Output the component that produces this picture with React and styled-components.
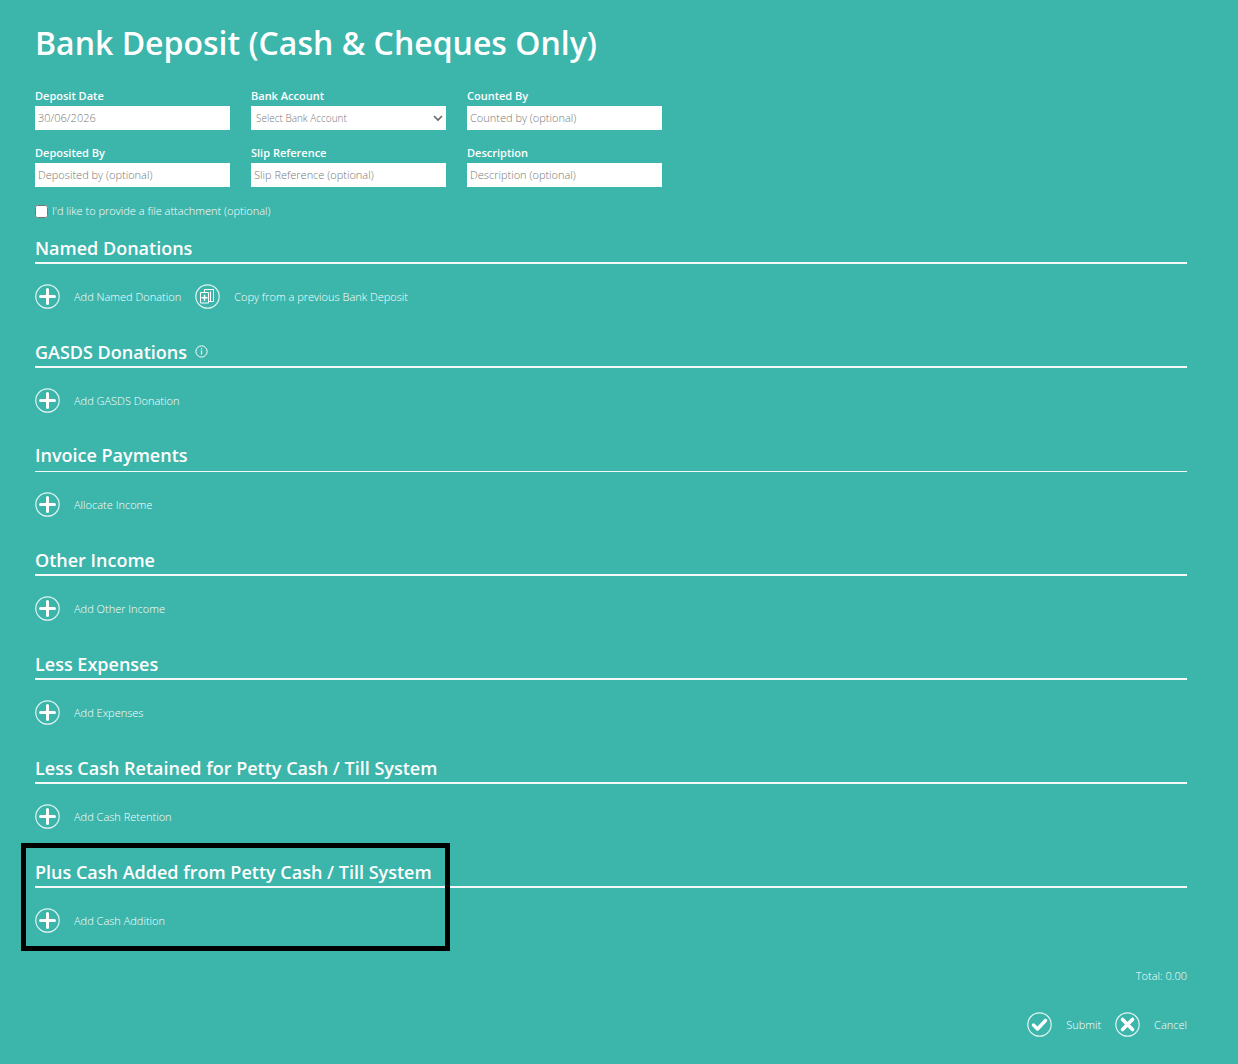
import React from "react";
import styled, { createGlobalStyle } from "styled-components";

const GlobalStyle = createGlobalStyle`
  *, *::before, *::after { box-sizing: border-box; }
  body {
    margin: 0;
    background: #3cb5ab;
    color: #fff;
    font-family: "Open Sans", "Noto Sans", sans-serif;
    font-size: 11px;
    font-weight: 350;
    line-height: 16px;
  }
`;

const Page = styled.form`
  padding: 20px 51px 24px 35px;
`;

const Title = styled.h1`
  margin: 0 0 22px;
  font-size: 32px;
  line-height: 46px;
  font-weight: 600;
`;

const Fields = styled.div`
  display: grid;
  grid-template-columns: repeat(3, 195px);
  gap: 15px 21px;
`;

const Field = styled.label`
  display: flex;
  flex-direction: column;
  gap: 2px;
  font-weight: 600;
`;

const Control = styled.input`
  width: 100%;
  height: 24px;
  padding: 0 3px 1px;
  border: 0;
  border-radius: 0;
  background: #fff;
  color: #777;
  font: 350 11px "Open Sans", "Noto Sans", sans-serif;
  &::placeholder { color: #777; opacity: 1; }
`;

const SelectBox = styled.span`
  display: grid;
  align-items: center;
  & > * { grid-area: 1 / 1; }
  & > svg { justify-self: end; margin-right: 3px; pointer-events: none; }
`;

const Select = styled(Control)`
  appearance: none;
  padding-left: 5px;
  padding-bottom: 0;
  font-size: 10px;
  font-weight: 300;
`;

const Attachment = styled.label`
  display: flex;
  align-items: center;
  gap: 4px;
  margin: 16px 0;
`;

const Checkbox = styled.input`
  width: 13px;
  height: 13px;
  margin: 0;
`;

const Section = styled.section`
  height: 104px;
`;

const Heading = styled.h2`
  display: flex;
  align-items: center;
  gap: 8px;
  height: 29px;
  margin: 0;
  padding-bottom: ${(p) => (p.$thin ? 4 : 2)}px;
  border-bottom: ${(p) => (p.$thin ? 1 : 2)}px solid #f2fbfa;
  font-size: 18px;
  line-height: 24px;
  font-weight: 600;
`;

const Actions = styled.div`
  display: flex;
  justify-content: ${(p) => (p.$end ? "flex-end" : "flex-start")};
  gap: 14px;
  margin-top: 20px;
`;

const Action = styled.button`
  display: flex;
  align-items: center;
  gap: 14px;
  padding: 0;
  border: 0;
  background: none;
  color: inherit;
  font: inherit;
  cursor: pointer;
`;

const Highlight = styled.div`
  margin: -16px 0 0 -14px;
  width: 429px;
  height: 108px;
  border: 5px solid #000;
  position: absolute;
  pointer-events: none;
`;

const Total = styled.p`
  margin: 5px 0 28px;
  text-align: right;
`;

const glyphs = {
  plus: <path d="M12.5 5.5v14M5.5 12.5h14" strokeWidth="3" strokeLinecap="round" />,
  check: <path d="M6.500 13l4 4 8-8.500" strokeWidth="3.400" strokeLinecap="round" strokeLinejoin="round" />,
  cross: <path d="M7.500 7.500l10 10M17.500 7.500l-10 10" strokeWidth="3.600" strokeLinecap="round" />,
  copy: (
    <>
      <path d="M5.500 8.500h8v10.500h-8zM9.500 8.500v-3h9v12h-5M15.500 7.500v10" strokeWidth="1" />
      <path d="M9.500 10.700v6M6.500 13.700h6" strokeWidth="1.400" />
    </>
  ),
};

const RoundIcon = ({ name }) => (
  <svg width="25" height="25" viewBox="0 0 25 25" fill="none" stroke="#fff" aria-hidden="true">
    <circle cx="12.5" cy="12.5" r="11.700" strokeWidth="1.200" strokeOpacity="0.85" />
    {glyphs[name]}
  </svg>
);

const InfoIcon = () => (
  <svg width="13" height="13" viewBox="0 0 13 13" fill="none" stroke="#fff" aria-hidden="true">
    <circle cx="6.5" cy="6.5" r="5.600" />
    <path d="M6.500 5.500v4M6.500 3.300v1.200" strokeWidth="1.200" />
  </svg>
);

const sections = [
  { title: "Named Donations", actions: [["plus", "Add Named Donation"], ["copy", "Copy from a previous Bank Deposit"]] },
  { title: "GASDS Donations", info: true, actions: [["plus", "Add GASDS Donation"]] },
  { title: "Invoice Payments", thin: true, actions: [["plus", "Allocate Income"]] },
  { title: "Other Income", actions: [["plus", "Add Other Income"]] },
  { title: "Less Expenses", actions: [["plus", "Add Expenses"]] },
  { title: "Less Cash Retained for Petty Cash / Till System", actions: [["plus", "Add Cash Retention"]] },
  { title: "Plus Cash Added from Petty Cash / Till System", highlight: true, actions: [["plus", "Add Cash Addition"]] },
];

export default function App() {
  return (
    <Page onSubmit={(e) => e.preventDefault()}>
      <GlobalStyle />
      <Title>Bank Deposit (Cash &amp; Cheques Only)</Title>
      <Fields>
        <Field>Deposit Date<Control defaultValue="30/06/2026" /></Field>
        <Field>
          Bank Account
          <SelectBox>
            <Select as="select"><option>Select Bank Account</option></Select>
            <svg width="10" height="8" viewBox="0 0 10 8" fill="none" stroke="#666" strokeWidth="1.600" aria-hidden="true">
              <path d="M1 2l4 4 4-4" />
            </svg>
          </SelectBox>
        </Field>
        <Field>Counted By<Control placeholder="Counted by (optional)" /></Field>
        <Field>Deposited By<Control placeholder="Deposited by (optional)" /></Field>
        <Field>Slip Reference<Control placeholder="Slip Reference (optional)" /></Field>
        <Field>Description<Control placeholder="Description (optional)" /></Field>
      </Fields>
      <Attachment>
        <Checkbox type="checkbox" />
        I'd like to provide a file attachment (optional)
      </Attachment>
      {sections.map((s) => (
        <Section key={s.title}>
          {s.highlight && <Highlight />}
          <Heading $thin={s.thin}>{s.title}{s.info && <InfoIcon />}</Heading>
          <Actions>
            {s.actions.map(([icon, text]) => (
              <Action type="button" key={text}><RoundIcon name={icon} />{text}</Action>
            ))}
          </Actions>
        </Section>
      ))}
      <Total>Total: 0.00</Total>
      <Actions $end>
        <Action type="submit"><RoundIcon name="check" />Submit</Action>
        <Action type="button"><RoundIcon name="cross" />Cancel</Action>
      </Actions>
    </Page>
  );
}
